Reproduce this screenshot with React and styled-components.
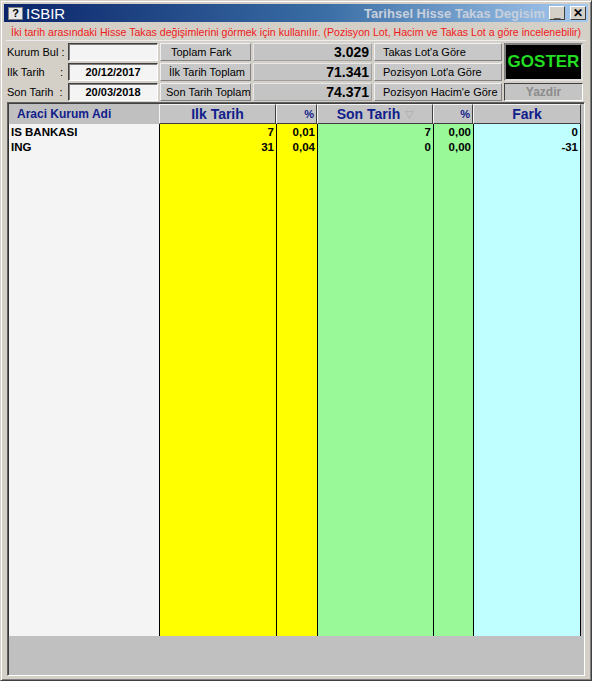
import React from 'react';
import styled, { createGlobalStyle } from 'styled-components';

const GlobalStyle = createGlobalStyle`
  html, body { margin: 0; padding: 0; background: #d4d0c8; }
  * { box-sizing: border-box; }
  body { font-family: "Liberation Sans", Arial, sans-serif; }
`;

const rows = [
  { name: 'IS BANKASI', ilk: '7', ilkPct: '0,01', son: '7', sonPct: '0,00', fark: '0' },
  { name: 'ING', ilk: '31', ilkPct: '0,04', son: '0', sonPct: '0,00', fark: '-31' },
];

const Window = styled.div`
  width: 592px;
  height: 681px;
  background: #d4d0c8;
  border: 1px solid #404040;
  border-top-color: #d4d0c8;
  border-left-color: #d4d0c8;
  box-shadow: inset 1px 1px 0 #fff, inset -1px -1px 0 #808080;
  padding: 3px 3px 4px 3px;
  display: flex;
  flex-direction: column;
`;

const TitleBar = styled.div`
  height: 18px;
  background: linear-gradient(to right, #0a246a 0%, #3a6ea5 55%, #a6caf0 100%);
  display: flex;
  align-items: center;
  padding: 0 2px 0 4px;
  gap: 3px;
`;

const HelpIcon = styled.span`
  width: 15px;
  height: 13px;
  background: #e8e8e8;
  border: 1px solid #808080;
  color: #000;
  font: bold 11px "Liberation Sans", Arial, sans-serif;
  display: flex;
  align-items: center;
  justify-content: center;
`;

const AppName = styled.span`
  color: #fff;
  font: 15px "Liberation Sans", Arial, sans-serif;
  flex: 1;
`;

const Caption = styled.span`
  color: #c8d0dc;
  font: bold 13px "Liberation Sans", Arial, sans-serif;
  white-space: nowrap;
  margin-right: 1px;
`;

const TitleButton = styled.span`
  width: 16px;
  height: 14px;
  flex-shrink: 0;
  background: #d4d0c8;
  border: 1px solid;
  border-color: #fff #404040 #404040 #fff;
  color: #000;
  font: bold 12px "Liberation Sans", Arial, sans-serif;
  display: flex;
  align-items: ${p => (p.$low ? 'flex-end' : 'center')};
  justify-content: center;
  line-height: 1;
  margin-left: ${p => (p.$gap ? '2px' : '0')};
`;

const Info = styled.div`
  color: #f01818;
  font-size: 10.6px;
  padding: 4px 0 0 5px;
  height: 19px;
  white-space: nowrap;
  border-bottom: 1px solid #ececec;
  margin: 0 2px;
`;

const Controls = styled.div`
  display: grid;
  grid-template-columns: 59px 90px 91px 119px 128px 79px;
  grid-template-rows: 18px 18px 18px;
  column-gap: 2px;
  row-gap: 2px;
  padding: 2px 0 0 3px;
  height: 60px;
`;

const Label = styled.div`
  font-size: 11px;
  color: #000;
  display: flex;
  align-items: center;
  white-space: pre;
`;

const Input = styled.div`
  background: #f4f4f4;
  border: 1px solid;
  border-color: #404040 #fff #fff #404040;
  box-shadow: inset 1px 1px 0 #808080;
  font-weight: bold;
  font-size: 11px;
  display: flex;
  align-items: center;
  justify-content: center;
`;

const Button = styled.div`
  background: #c8c8c8;
  border: 1px solid;
  border-color: #f0f0f0 #808080 #808080 #f0f0f0;
  font-size: 11px;
  color: #000;
  display: flex;
  align-items: center;
  padding-left: ${p => p.$pad || 8}px;
  white-space: nowrap;
  overflow: hidden;
`;

const Value = styled.div`
  background: #c4c4c4;
  border: 1px solid;
  border-color: #e8e8e8 #a0a0a0 #a0a0a0 #e8e8e8;
  font-weight: bold;
  font-size: 14px;
  display: flex;
  align-items: center;
  justify-content: flex-end;
  padding-right: 2px;
`;

const Goster = styled.div`
  grid-row: 1 / span 2;
  grid-column: 6;
  background: #000;
  border: 2px solid;
  border-color: #808080 #e0e0e0 #e0e0e0 #808080;
  color: #22dd22;
  font-weight: bold;
  font-size: 17px;
  display: flex;
  align-items: center;
  justify-content: center;
`;

const Yazdir = styled.div`
  grid-row: 3;
  grid-column: 6;
  background: #c4c4c4;
  border: 1px solid;
  border-color: #404040 #fff #fff #404040;
  color: #8c8c8c;
  font-weight: bold;
  font-size: 12px;
  display: flex;
  align-items: center;
  justify-content: center;
`;

const Grid = styled.div`
  flex: 1;
  margin: 1px 3px 0 3px;
  background: #c0c0c0;
  border: 1px solid;
  border-color: #606060 #fff #fff #606060;
  box-shadow: inset 1px 1px 0 #404040;
  display: flex;
  padding: 1px 0 0 0;
`;

const Column = styled.div`
  width: ${p => p.$w}px;
  display: flex;
  flex-direction: column;
`;

const NameHeader = styled.div`
  height: 20px;
  color: #10208c;
  font-weight: bold;
  font-size: 12px;
  display: flex;
  align-items: center;
  padding-left: 9px;
`;

const Header = styled.div`
  height: 20px;
  background: #c4c4c4;
  border: 1px solid;
  border-color: #f4f4f4 #404040 #404040 #f4f4f4;
  color: #10208c;
  font-weight: bold;
  font-size: ${p => (p.$small ? '11px' : '14px')};
  display: flex;
  align-items: center;
  justify-content: ${p => (p.$small ? 'flex-end' : 'center')};
  padding-right: ${p => (p.$small ? '2px' : '0')};
  gap: 5px;
`;

const SortMark = styled.span`
  color: #a8a8a8;
  font-size: 11px;
  font-weight: normal;
`;

const Body = styled.div`
  height: 512px;
  background: ${p => p.$bg};
  border-left: ${p => (p.$line ? '1px solid #000' : 'none')};
  border-right: ${p => (p.$end ? '1px solid #000' : 'none')};
`;

const NameBody = styled(Body)`
  padding-left: 2px;
  box-shadow: inset 1px 0 0 #303030;
`;

const Cell = styled.div`
  height: 15px;
  font-weight: bold;
  font-size: 11.5px;
  color: #000;
  display: flex;
  align-items: center;
  justify-content: ${p => (p.$left ? 'flex-start' : 'flex-end')};
  padding: ${p => (p.$left ? '0 0 0 1px' : '0 2px 0 0')};
  white-space: nowrap;
`;

const columns = [
  { key: 'ilk', title: 'Ilk Tarih', w: 117, bg: '#ffff00' },
  { key: 'ilkPct', title: '%', w: 41, bg: '#ffff00', small: true },
  { key: 'son', title: 'Son Tarih', w: 116, bg: '#99f999', sort: true },
  { key: 'sonPct', title: '%', w: 40, bg: '#99f999', small: true },
  { key: 'fark', title: 'Fark', w: 108, bg: '#c0ffff', end: true },
];

export default function App() {
  return (
    <>
      <GlobalStyle />
      <Window>
        <TitleBar>
          <HelpIcon>?</HelpIcon>
          <AppName>ISBIR</AppName>
          <Caption>Tarihsel Hisse Takas Degisim</Caption>
          <TitleButton $low>_</TitleButton>
          <TitleButton $gap>✕</TitleButton>
        </TitleBar>
        <Info>
          İki tarih arasındaki Hisse Takas değişimlerini görmek için kullanılır. (Pozisyon Lot, Hacim ve Takas Lot a göre incelenebilir)
        </Info>
        <Controls>
          <Label>Kurum Bul :</Label>
          <Input />
          <Button $pad={10}>Toplam Fark</Button>
          <Value>3.029</Value>
          <Button>Takas Lot'a Göre</Button>
          <Goster>GOSTER</Goster>

          <Label>{'Ilk Tarih     :'}</Label>
          <Input>20/12/2017</Input>
          <Button>İlk Tarih Toplam</Button>
          <Value>71.341</Value>
          <Button>Pozisyon Lot'a Göre</Button>

          <Label>{'Son Tarih  :'}</Label>
          <Input>20/03/2018</Input>
          <Button $pad={5}>Son Tarih Toplam</Button>
          <Value>74.371</Value>
          <Button>Pozisyon Hacim'e Göre</Button>
          <Yazdir>Yazdir</Yazdir>
        </Controls>
        <Grid>
          <Column $w={151}>
            <NameHeader>Araci Kurum Adi</NameHeader>
            <NameBody $bg="#f4f4f4">
              {rows.map(r => (
                <Cell $left key={r.name}>{r.name}</Cell>
              ))}
            </NameBody>
          </Column>
          {columns.map(c => (
            <Column $w={c.w} key={c.key + c.title}>
              <Header $small={c.small}>
                {c.title}
                {c.sort && <SortMark>▽</SortMark>}
              </Header>
              <Body $bg={c.bg} $line $end={c.end}>
                {rows.map(r => (
                  <Cell key={r.name}>{r[c.key]}</Cell>
                ))}
              </Body>
            </Column>
          ))}
        </Grid>
      </Window>
    </>
  );
}
